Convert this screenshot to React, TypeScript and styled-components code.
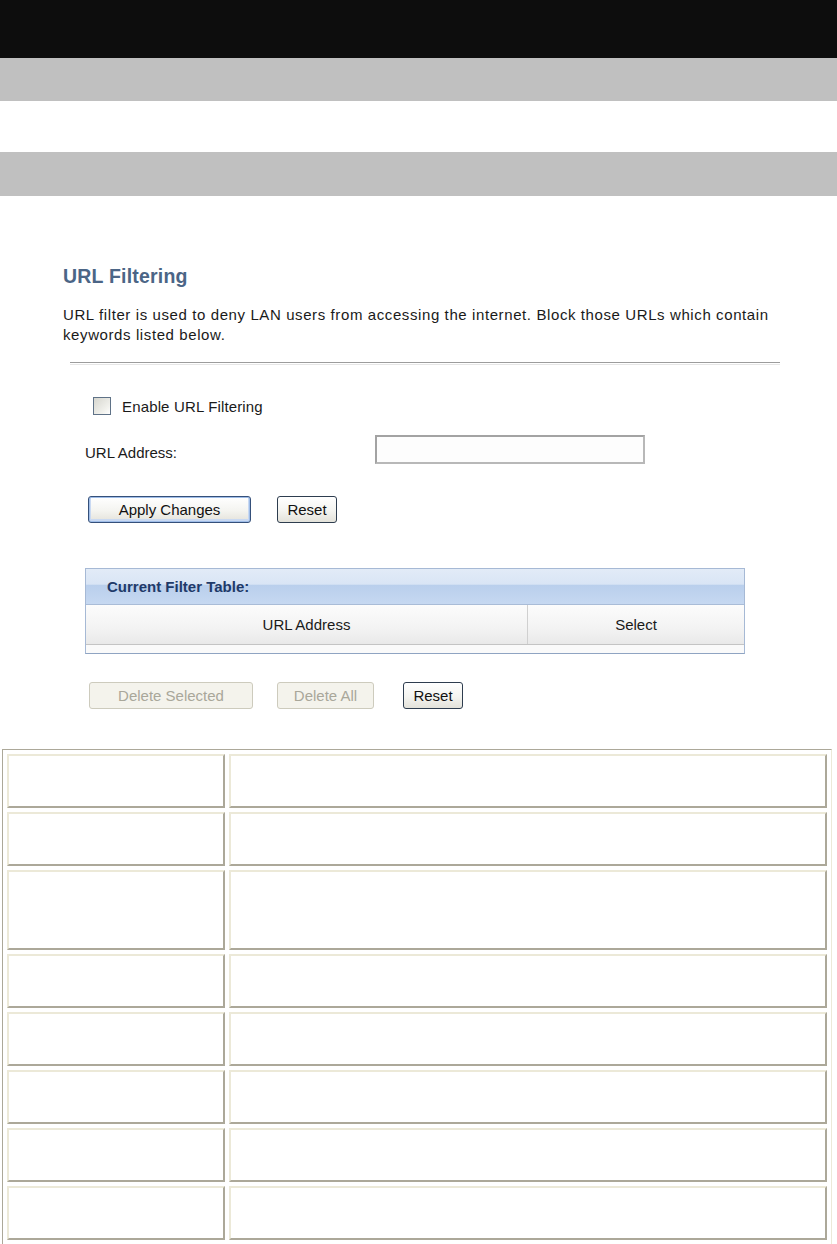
import styled, { createGlobalStyle } from 'styled-components'

const GlobalStyle = createGlobalStyle`
  html, body {
    margin: 0;
    padding: 0;
    background: #ffffff;
  }
  body {
    font-family: "Liberation Sans", Arial, sans-serif;
    color: #1a1a1a;
  }
`

const Page = styled.div`
  width: 837px;
  display: flex;
  flex-direction: column;
`

const Band = styled.div<{ $h: number; $bg: string; $mt?: number }>`
  height: ${(p) => p.$h}px;
  background: ${(p) => p.$bg};
  margin-top: ${(p) => p.$mt ?? 0}px;
`

const Section = styled.div`
  margin: 69px 0 0 63px;
  width: 717px;
  display: flex;
  flex-direction: column;
`

const Title = styled.h2`
  margin: 0;
  font-size: 19.5px;
  line-height: 22px;
  font-weight: bold;
  letter-spacing: 0.2px;
  color: #4b6586;
`

const Description = styled.p`
  margin: 18px 0 0;
  width: 716px;
  font-size: 15px;
  line-height: 20px;
  letter-spacing: 0.6px;
  color: #1a1a1a;
`

const Rule = styled.div`
  margin: 17px 0 0 7px;
  height: 1px;
  border-top: 1px solid #9c9c9c;
  border-bottom: 1px solid #e6e6e6;
`

const Form = styled.div`
  padding-left: 22px;
  display: flex;
  flex-direction: column;
`

const CheckRow = styled.label`
  margin: 32px 0 0 8px;
  display: flex;
  align-items: center;
  gap: 11px;
  font-size: 15px;
  letter-spacing: 0.15px;
  height: 18px;
`

const CheckBox = styled.span`
  width: 16px;
  height: 16px;
  border: 1px solid #5f7287;
  background: linear-gradient(135deg, #d6d6cf 0%, #f1f1ec 70%, #ffffff 100%);
`

const FieldRow = styled.div`
  margin-top: 20px;
  display: flex;
  align-items: center;
  height: 29px;
`

const FieldLabel = styled.span`
  width: 290px;
  font-size: 15px;
  padding-top: 5px;
`

const TextInput = styled.div`
  width: 266px;
  height: 25px;
  border: 2px solid #a3a3a3;
  border-right-color: #b8b8b8;
  border-bottom-color: #b8b8b8;
  background: #fdfdfd;
`

const ButtonRow = styled.div<{ $mt: number; $ml: number }>`
  margin: ${(p) => p.$mt}px 0 0 ${(p) => p.$ml}px;
  display: flex;
  align-items: center;
`

const Button = styled.button<{ $w: number; $gap?: number; $variant?: 'default' | 'primary' | 'disabled' }>`
  box-sizing: border-box;
  width: ${(p) => p.$w}px;
  height: 27px;
  margin-left: ${(p) => p.$gap ?? 0}px;
  padding: 0;
  font-family: "Liberation Sans", Arial, sans-serif;
  font-size: 15px;
  border-radius: 3px;
  color: ${(p) => (p.$variant === 'disabled' ? '#a9a79a' : '#111111')};
  border: 1px solid
    ${(p) => (p.$variant === 'disabled' ? '#cdcbbd' : p.$variant === 'primary' ? '#35507a' : '#2e3d4f')};
  background: ${(p) =>
    p.$variant === 'disabled'
      ? '#f4f3ec'
      : 'linear-gradient(180deg, #ffffff 0%, #f4f4f0 55%, #e3e2da 100%)'};
  box-shadow: ${(p) =>
    p.$variant === 'primary' ? 'inset 0 0 0 1px #9fbde8, inset 0 -1px 0 2px #c9d9f2' : 'none'};
`

const FilterBox = styled.div`
  margin-top: 45px;
  width: 658px;
  border: 1px solid #a6b9d5;
  border-bottom-color: #8fa4c2;
  display: flex;
  flex-direction: column;
`

const FilterHead = styled.div`
  height: 35px;
  padding-left: 21px;
  display: flex;
  align-items: center;
  font-size: 15px;
  font-weight: bold;
  color: #1f3a69;
  background: linear-gradient(180deg, #e2ebf7 0%, #d9e5f5 44%, #b9cfec 45%, #c6d8f1 100%);
`

const ColHead = styled.div`
  display: grid;
  grid-template-columns: 442px 1fr;
  height: 39px;
  border-top: 1px solid #a9bcd7;
  border-bottom: 1px solid #c4c4c4;
  background: linear-gradient(180deg, #fcfcfc 0%, #f3f3f3 60%, #e9e9e9 100%);
`

const ColCell = styled.div<{ $divider?: boolean }>`
  display: flex;
  align-items: center;
  justify-content: center;
  font-size: 15px;
  color: #1a1a1a;
  border-right: ${(p) => (p.$divider ? '1px solid #d0d0d0' : 'none')};
`

const FilterFoot = styled.div`
  height: 8px;
  background: #fafafa;
`

const Grid = styled.div`
  margin: 40px 0 0 2px;
  width: 830px;
  box-sizing: border-box;
  display: grid;
  grid-template-columns: 218px 598px;
  gap: 4px;
  padding: 4px;
  border: 1px solid #aca899;
  border-right-color: #ece9d8;
  border-bottom-color: #ece9d8;
`

const Cell = styled.div<{ $h: number }>`
  box-sizing: border-box;
  height: ${(p) => p.$h}px;
  border: 2px solid #aca899;
  border-top-color: #ece9d8;
  border-left-color: #ece9d8;
  background: #ffffff;
`

const rowHeights = [54, 54, 80, 54, 54, 54, 54, 54]

export default function App() {
  return (
    <Page>
      <GlobalStyle />
      <Band $h={58} $bg="#0d0d0d" />
      <Band $h={43} $bg="#c0c0c0" />
      <Band $h={44} $bg="#c0c0c0" $mt={51} />

      <Section>
        <Title>URL Filtering</Title>
        <Description>
          URL filter is used to deny LAN users from accessing the internet. Block those URLs which contain
          keywords listed below.
        </Description>
        <Rule />

        <Form>
          <CheckRow>
            <CheckBox />
            Enable URL Filtering
          </CheckRow>

          <FieldRow>
            <FieldLabel>URL Address:</FieldLabel>
            <TextInput />
          </FieldRow>

          <ButtonRow $mt={32} $ml={3}>
            <Button $w={163} $variant="primary">Apply Changes</Button>
            <Button $w={60} $gap={26}>Reset</Button>
          </ButtonRow>

          <FilterBox>
            <FilterHead>Current Filter Table:</FilterHead>
            <ColHead>
              <ColCell $divider>URL Address</ColCell>
              <ColCell>Select</ColCell>
            </ColHead>
            <FilterFoot />
          </FilterBox>

          <ButtonRow $mt={28} $ml={4}>
            <Button $w={164} $variant="disabled">Delete Selected</Button>
            <Button $w={97} $gap={24} $variant="disabled">Delete All</Button>
            <Button $w={60} $gap={29}>Reset</Button>
          </ButtonRow>
        </Form>
      </Section>

      <Grid>
        {rowHeights.map((h, i) => [<Cell key={`a${i}`} $h={h} />, <Cell key={`b${i}`} $h={h} />])}
      </Grid>
    </Page>
  )
}
